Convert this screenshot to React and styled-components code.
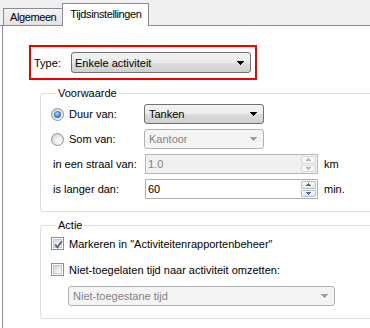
import React from 'react';
import styled, { createGlobalStyle, css } from 'styled-components';

const GlobalStyle = createGlobalStyle`
    html, body {
        margin: 0;
        padding: 0;
        background: #fff;
    }
    body {
        font-family: "Liberation Sans", Arial, sans-serif;
        font-size: 11px;
        color: #000;
    }
`

const Page = styled.div`
    width: 370px;
    height: 328px;
    overflow: hidden;
    background: #fff;
    display: flex;
    flex-direction: column;
`

const TabBar = styled.div`
    display: flex;
    align-items: flex-end;
    height: 25px;
    padding-left: 3px;
    background: #f0f0f0;
    border-bottom: 1px solid #898c95;
    flex-shrink: 0;
`

const Tab = styled.div`
    box-sizing: border-box;
    display: flex;
    align-items: center;
    border: 1px solid #898c95;
    border-bottom: none;
    letter-spacing: -0.4px;
    ${p => p.$active ? css`
        height: 23px;
        margin-bottom: -1px;
        margin-left: -1px;
        padding: 0 7px 2px 7px;
        background: #fff;
        position: relative;
        z-index: 1;
    ` : css`
        height: 17px;
        padding: 0 6px;
        background: linear-gradient(#f3f3f3, #e3e3e3);
    `}
`

const Panel = styled.div`
    flex: 1;
    margin-left: 2px;
    border-left: 1px solid #898c95;
    padding-top: 19px;
`

const TypeBox = styled.div`
    box-sizing: border-box;
    width: 228px;
    height: 35px;
    margin-left: 26px;
    border: 2px solid #f20000;
    display: flex;
    align-items: center;
    justify-content: space-between;
    padding: 0 4px 0 3px;
`

const Group = styled.fieldset`
    box-sizing: border-box;
    width: 345px;
    margin: ${p => p.$top}px 0 0 37px;
    padding: ${p => p.$pt}px 0 12px 10px;
    border: 1px solid #d5dfe5;
    border-radius: 3px;
    min-width: 0;
`

const Legend = styled.legend`
    margin-left: 5px;
    padding: 0 2px;
    line-height: 13px;
    height: 13px;
`

const ConditionGrid = styled.div`
    display: grid;
    grid-template-columns: 87px 174px auto;
    grid-auto-rows: 20px;
    column-gap: 6px;
    row-gap: 5px;
    align-items: center;
`

const Choice = styled.label`
    display: flex;
    align-items: center;
    gap: 5px;
    white-space: nowrap;
`

const FieldLabel = styled.span`
    padding-left: 2px;
    white-space: nowrap;
`

const Unit = styled.span`
    white-space: nowrap;
`

const Radio = styled.span`
    box-sizing: border-box;
    width: 13px;
    height: 13px;
    border-radius: 50%;
    border: 1px solid #8e8f8f;
    background: radial-gradient(circle at 65% 70%, #ffffff, #e8e8e8 45%, #cfcfcf);
    display: flex;
    align-items: center;
    justify-content: center;
    flex-shrink: 0;
    &::after {
        content: '';
        display: ${p => p.$checked ? 'block' : 'none'};
        width: 7px;
        height: 7px;
        border-radius: 50%;
        background: radial-gradient(circle at 45% 40%, #b7e3fb 0%, #3f8fd8 45%, #14428a 100%);
    }
`

const Box = styled.span`
    box-sizing: border-box;
    width: 13px;
    height: 13px;
    border: 1px solid #8e8f8f;
    padding: 1px;
    background: #fff;
    flex-shrink: 0;
    display: flex;
    position: relative;
    &::before {
        content: '';
        flex: 1;
        background: linear-gradient(135deg, #d3d3d3, #f2f2f2 70%, #fbfbfb);
        border: 1px solid #c6c6c6;
    }
    svg {
        position: absolute;
        left: 0;
        top: 0;
    }
`

const Combo = styled.div`
    box-sizing: border-box;
    width: ${p => p.$w}px;
    height: ${p => p.$h || 20}px;
    display: flex;
    align-items: center;
    justify-content: space-between;
    padding: 0 6px 0 ${p => p.$pl || 4}px;
    border-radius: 3px;
    white-space: nowrap;
    ${p => p.$disabled ? css`
        border: 1px solid #adb2b5;
        background: #f4f4f4;
        color: #838383;
    ` : css`
        border: 1px solid #707070;
        background: linear-gradient(#f2f2f2 0%, #ebebeb 50%, #dddddd 51%, #cfcfcf 100%);
        color: #000;
    `}
`

const SpinBox = styled.div`
    box-sizing: border-box;
    height: 20px;
    margin-left: 1px;
    display: flex;
    align-items: stretch;
    border: 1px solid ${p => p.$disabled ? '#b8b8b8' : '#abadb3'};
    background: ${p => p.$disabled ? '#f0f0f0' : '#fff'};
    color: ${p => p.$disabled ? '#838383' : '#000'};
`

const SpinValue = styled.span`
    flex: 1;
    display: flex;
    align-items: center;
    padding-left: 2px;
`

const SpinButtons = styled.div`
    width: 15px;
    display: flex;
    flex-direction: column;
    gap: 1px;
    padding: 1px 1px 1px 0;
`

const SpinButton = styled.div`
    flex: 1;
    display: flex;
    align-items: center;
    justify-content: center;
    border: 1px solid ${p => p.$disabled ? '#d9d9d9' : '#b7bec7'};
    border-radius: 1px;
    background: ${p => p.$disabled ? '#f4f4f4' : 'linear-gradient(#f8f8f8, #e4e7ea)'};
`

const ActionBody = styled.div`
    display: flex;
    flex-direction: column;
`

const CheckRow = styled.label`
    display: flex;
    align-items: center;
    gap: 5px;
    height: 13px;
    margin-top: ${p => p.$mt || 0}px;
    white-space: nowrap;
`

const DropRow = styled.div`
    margin: 10px 0 0 17px;
`

const Arrow = ({ color = '#000', w = 7 }) => (
    <svg width={w} height={Math.ceil(w / 2)} shapeRendering="crispEdges">
        <polygon points={`0,0 ${w},0 ${w / 2},${Math.ceil(w / 2)}`} fill={color} />
    </svg>
)

const SpinArrow = ({ up, disabled }) => (
    <svg width="5" height="3" shapeRendering="crispEdges">
        <polygon points={up ? '0,3 5,3 2.5,0' : '0,0 5,0 2.5,3'} fill={disabled ? '#b4b4b4' : '#4e6a9c'} />
    </svg>
)

const Spin = ({ value, disabled }) => (
    <SpinBox $disabled={disabled}>
        <SpinValue>{value}</SpinValue>
        <SpinButtons>
            <SpinButton $disabled={disabled}><SpinArrow up disabled={disabled} /></SpinButton>
            <SpinButton $disabled={disabled}><SpinArrow disabled={disabled} /></SpinButton>
        </SpinButtons>
    </SpinBox>
)

const Check = ({ checked }) => (
    <Box>
        {checked && (
            <svg width="13" height="13">
                <path d="M3.2 6.6 L5.4 9.2 L9.8 3.2" stroke="#4a5f95" strokeWidth="1.8" fill="none" />
            </svg>
        )}
    </Box>
)

const App = () => {
    return (
        <>
            <GlobalStyle />
            <Page>
                <TabBar>
                    <Tab>Algemeen</Tab>
                    <Tab $active>Tijdsinstellingen</Tab>
                </TabBar>
                <Panel>
                    <TypeBox>
                        <span>Type:</span>
                        <Combo $w={180} $h={21} $pl={3}>
                            <span>Enkele activiteit</span>
                            <Arrow />
                        </Combo>
                    </TypeBox>

                    <Group $top={7} $pt={4}>
                        <Legend>Voorwaarde</Legend>
                        <ConditionGrid>
                            <Choice><Radio $checked />Duur van:</Choice>
                            <Combo $w={120}>
                                <span>Tanken</span>
                                <Arrow />
                            </Combo>
                            <span />

                            <Choice><Radio />Som van:</Choice>
                            <Combo $w={120} $disabled>
                                <span>Kantoor</span>
                                <Arrow color="#a0a0a0" />
                            </Combo>
                            <span />

                            <FieldLabel>in een straal van:</FieldLabel>
                            <Spin value="1.0" disabled />
                            <Unit>km</Unit>

                            <FieldLabel>is langer dan:</FieldLabel>
                            <Spin value="60" />
                            <Unit>min.</Unit>
                        </ConditionGrid>
                    </Group>

                    <Group $top={7} $pt={5}>
                        <Legend>Actie</Legend>
                        <ActionBody>
                            <CheckRow><Check checked />Markeren in "Activiteitenrapportenbeheer"</CheckRow>
                            <CheckRow $mt={13}><Check />Niet-toegelaten tijd naar activiteit omzetten:</CheckRow>
                            <DropRow>
                                <Combo $w={267} $disabled>
                                    <span>Niet-toegestane tijd</span>
                                    <Arrow color="#a0a0a0" />
                                </Combo>
                            </DropRow>
                        </ActionBody>
                    </Group>
                </Panel>
            </Page>
        </>
    );
}

export default App;
